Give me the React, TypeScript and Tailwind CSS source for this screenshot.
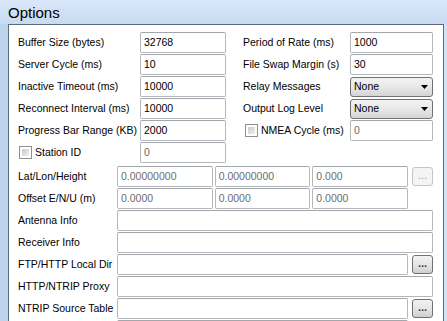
import React from "react";

function TextBox({ value = "", disabled = false, className = "" }: { value?: string; disabled?: boolean; className?: string }) {
	return (
		<div
			className={`h-full flex items-center px-[3px] bg-white border border-[#b4b7bc] border-t-[#a3a6ab] rounded-[2px] whitespace-nowrap overflow-hidden ${
				disabled ? "text-[#6d6d6d]" : "text-black"
			} ${className}`}
		>
			{value}
		</div>
	);
}

function Combo({ value }: { value: string }) {
	return (
		<div className="w-[83px] h-[20px] flex items-center justify-between pl-[3px] pr-[4px] border border-[#707070] rounded-[3px] bg-gradient-to-b from-[#f3f3f3] via-[#e8e8e8] to-[#d4d4d4]">
			<span>{value}</span>
			{/* drop arrow */}
			<svg width="7" height="4" viewBox="0 0 7 4">
				<path d="M0 0h7L3.5 4z" fill="#000" />
			</svg>
		</div>
	);
}

function DotsButton({ disabled = false, label = "..." }: { disabled?: boolean; label?: string }) {
	return (
		<div
			className={`shrink-0 w-[21px] h-[19px] flex items-center justify-center rounded-[3px] border text-[11px] leading-none pb-[2px] ${
				disabled
					? "border-[#c3c6c9] bg-[#f4f4f4] text-[#a0a0a0]"
					: "border-[#707070] bg-gradient-to-b from-[#f2f2f2] via-[#e6e6e6] to-[#cfcfcf] text-[#3b2a63] font-bold"
			}`}
		>
			{label}
		</div>
	);
}

function CheckBox() {
	return (
		<div className="shrink-0 w-[13px] h-[13px] border border-[#8e8f8f] bg-white p-[2px]">
			<div className="w-full h-full bg-gradient-to-br from-[#cbcbcb] to-[#f0f0f0]" />
		</div>
	);
}

function TopRow({ left, right }: { left: React.ReactNode; right: React.ReactNode }) {
	return (
		<div className="flex items-center h-[21px]">
			<div className="w-[208px] h-full flex items-center">{left}</div>
			<div className="w-[17px]" />
			<div className="w-[190px] h-full flex items-center">{right}</div>
		</div>
	);
}

function LabelInput({ label, value, w, disabled }: { label: string; value: string; w: string; disabled?: boolean }) {
	return (
		<>
			<span className="flex-1 whitespace-nowrap">{label}</span>
			<TextBox value={value} disabled={disabled} className={w} />
		</>
	);
}

function WideRow({ label, children }: { label: string; children: React.ReactNode }) {
	return (
		<div className="flex items-center h-[21px]">
			<span className="w-[99px] shrink-0 whitespace-nowrap">{label}</span>
			<div className="flex-1 h-full flex items-center gap-[4px]">{children}</div>
		</div>
	);
}

export default function App() {
	return (
		<div className="w-[447px] h-[321px] overflow-hidden bg-[#c9dcf3] font-['Liberation_Sans',Arial,sans-serif] text-[10.5px] text-black flex flex-col">
			{/* Title bar */}
			<div className="h-[24px] shrink-0 flex items-center pl-[8px] bg-gradient-to-b from-[#d9e7f8] to-[#c8dbf2]">
				<span className="text-[15px] leading-none text-black">Options</span>
			</div>

			<div className="flex-1 flex pl-[8px] pr-[3px] bg-gradient-to-r from-[#bcd3ef] via-[#d3e3f6] to-[#d3e3f6]">
				<div className="flex-1 bg-white border-l border-t border-r border-[#5f6b79] pl-[9px] pr-[10px] pt-[7px] flex flex-col gap-[1px]">
					<TopRow
						left={<LabelInput label="Buffer Size (bytes)" value="32768" w="w-[86px]" />}
						right={<LabelInput label="Period of Rate (ms)" value="1000" w="w-[83px]" />}
					/>
					<TopRow
						left={<LabelInput label="Server Cycle  (ms)" value="10" w="w-[86px]" />}
						right={<LabelInput label="File Swap Margin (s)" value="30" w="w-[83px]" />}
					/>
					<TopRow
						left={<LabelInput label="Inactive Timeout (ms)" value="10000" w="w-[86px]" />}
						right={
							<>
								<span className="flex-1">Relay Messages</span>
								<Combo value="None" />
							</>
						}
					/>
					<TopRow
						left={<LabelInput label="Reconnect Interval  (ms)" value="10000" w="w-[86px]" />}
						right={
							<>
								<span className="flex-1">Output Log Level</span>
								<Combo value="None" />
							</>
						}
					/>
					<TopRow
						left={<LabelInput label="Progress Bar Range (KB)" value="2000" w="w-[86px]" />}
						right={
							<>
								<div className="flex-1 flex items-center gap-[3px] pl-[2px]">
									<CheckBox />
									<span>NMEA Cycle (ms)</span>
								</div>
								<TextBox value="0" disabled className="w-[83px]" />
							</>
						}
					/>
					<TopRow
						left={
							<>
								<div className="flex-1 flex items-center gap-[3px] pl-[1px]">
									<CheckBox />
									<span>Station ID</span>
								</div>
								<TextBox value="0" disabled className="w-[86px]" />
							</>
						}
						right={null}
					/>

					<div className="h-[1px]" />

					<WideRow label="Lat/Lon/Height">
						<div className="flex-1 h-full grid grid-cols-3 gap-[2px]">
							<TextBox value="0.00000000" disabled />
							<TextBox value="0.00000000" disabled />
							<TextBox value="0.000" disabled />
						</div>
						<DotsButton disabled />
					</WideRow>
					<WideRow label="Offset E/N/U (m)">
						<div className="flex-1 h-full grid grid-cols-3 gap-[2px]">
							<TextBox value="0.0000" disabled />
							<TextBox value="0.0000" disabled />
							<TextBox value="0.0000" disabled />
						</div>
						<div className="w-[21px] shrink-0" />
					</WideRow>
					<WideRow label="Antenna Info">
						<TextBox className="flex-1" />
					</WideRow>
					<WideRow label="Receiver Info">
						<TextBox className="flex-1" />
					</WideRow>
					<WideRow label="FTP/HTTP Local Dir">
						<TextBox className="flex-1" />
						<DotsButton />
					</WideRow>
					<WideRow label="HTTP/NTRIP Proxy">
						<TextBox className="flex-1" />
					</WideRow>
					<WideRow label="NTRIP Source Table">
						<TextBox className="flex-1" />
						<DotsButton />
					</WideRow>
					{/* next row, cut off by the window edge */}
					<WideRow label="">
						<TextBox className="flex-1" />
						<DotsButton label="" />
					</WideRow>
				</div>
			</div>
		</div>
	);
}
